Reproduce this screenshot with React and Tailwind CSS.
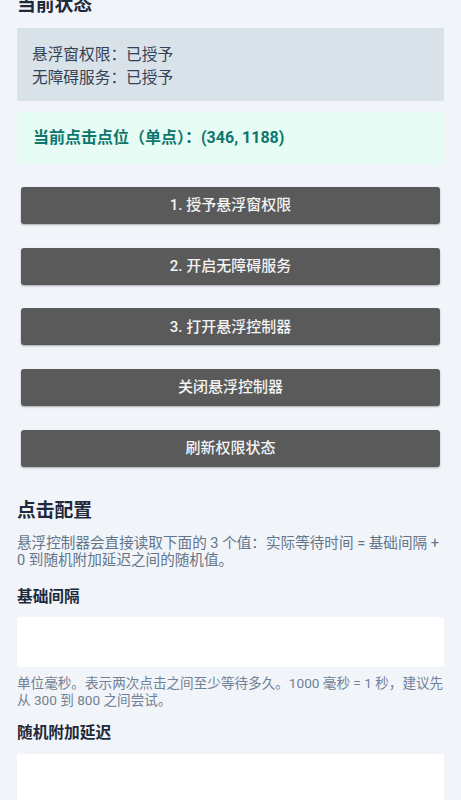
const buttons = [
  "1. 授予悬浮窗权限",
  "2. 开启无障碍服务",
  "3. 打开悬浮控制器",
  "关闭悬浮控制器",
  "刷新权限状态",
];

const font = {
  fontFamily: '"Roboto", "Noto Sans CJK SC", sans-serif',
};

export default function App() {
  return (
    <div
      className="min-h-screen overflow-hidden bg-[#f1f5f9] px-[17px] pb-10"
      style={font}
    >
      <h2 className="-mt-[7px] text-[18.8px] font-bold leading-[24px] text-[#1e293b]">
        当前状态
      </h2>

      <div className="mt-[11px] rounded-[2px] bg-[#d9e1e9] px-[15px] pb-[12px] pt-[16px] text-[15.7px] leading-[22.5px] text-[#334155]">
        <div>悬浮窗权限：已授予</div>
        <div>无障碍服务：已授予</div>
      </div>

      <div className="mt-[11px] flex h-[52px] items-center rounded-[2px] bg-[#e6fcf5] px-[16px] text-[16px] font-bold text-[#0f766e]">
        当前点击点位（单点）：(346, 1188)
      </div>

      <div className="mt-[23px] flex flex-col gap-[23.7px] px-[4px]">
        {buttons.map((b) => (
          <button
            key={b}
            className="flex h-[37px] items-center justify-center rounded-[3px] bg-[#5a5a5b] text-[15px] font-medium text-[#f3f3f3] shadow-[0_1px_2px_rgba(0,0,0,0.3)]"
          >
            {b}
          </button>
        ))}
      </div>

      <h2 className="mt-[32px] text-[18.8px] font-bold leading-[24px] text-[#1e293b]">
        点击配置
      </h2>
      <p className="mt-[12px] text-[14.6px] leading-[17.5px] text-[#64748b]">
        悬浮控制器会直接读取下面的 3 个值：实际等待时间 = 基础间隔 + 0
        到随机附加延迟之间的随机值。
      </p>

      <div className="mt-[16px] text-[15.7px] font-bold leading-[22px] text-[#1e293b]">
        基础间隔
      </div>
      <div className="mt-[9px] h-[50px] rounded-[3px] bg-white" />
      <p className="mt-[8px] text-[13.6px] leading-[17px] text-[#718096]">
        单位毫秒。表示两次点击之间至少等待多久。1000 毫秒 = 1 秒，建议先从 300
        到 800 之间尝试。
      </p>

      <div className="mt-[13px] text-[15.7px] font-bold leading-[22px] text-[#1e293b]">
        随机附加延迟
      </div>
      <div className="mt-[10px] h-[50px] rounded-[3px] bg-white" />
    </div>
  );
}
